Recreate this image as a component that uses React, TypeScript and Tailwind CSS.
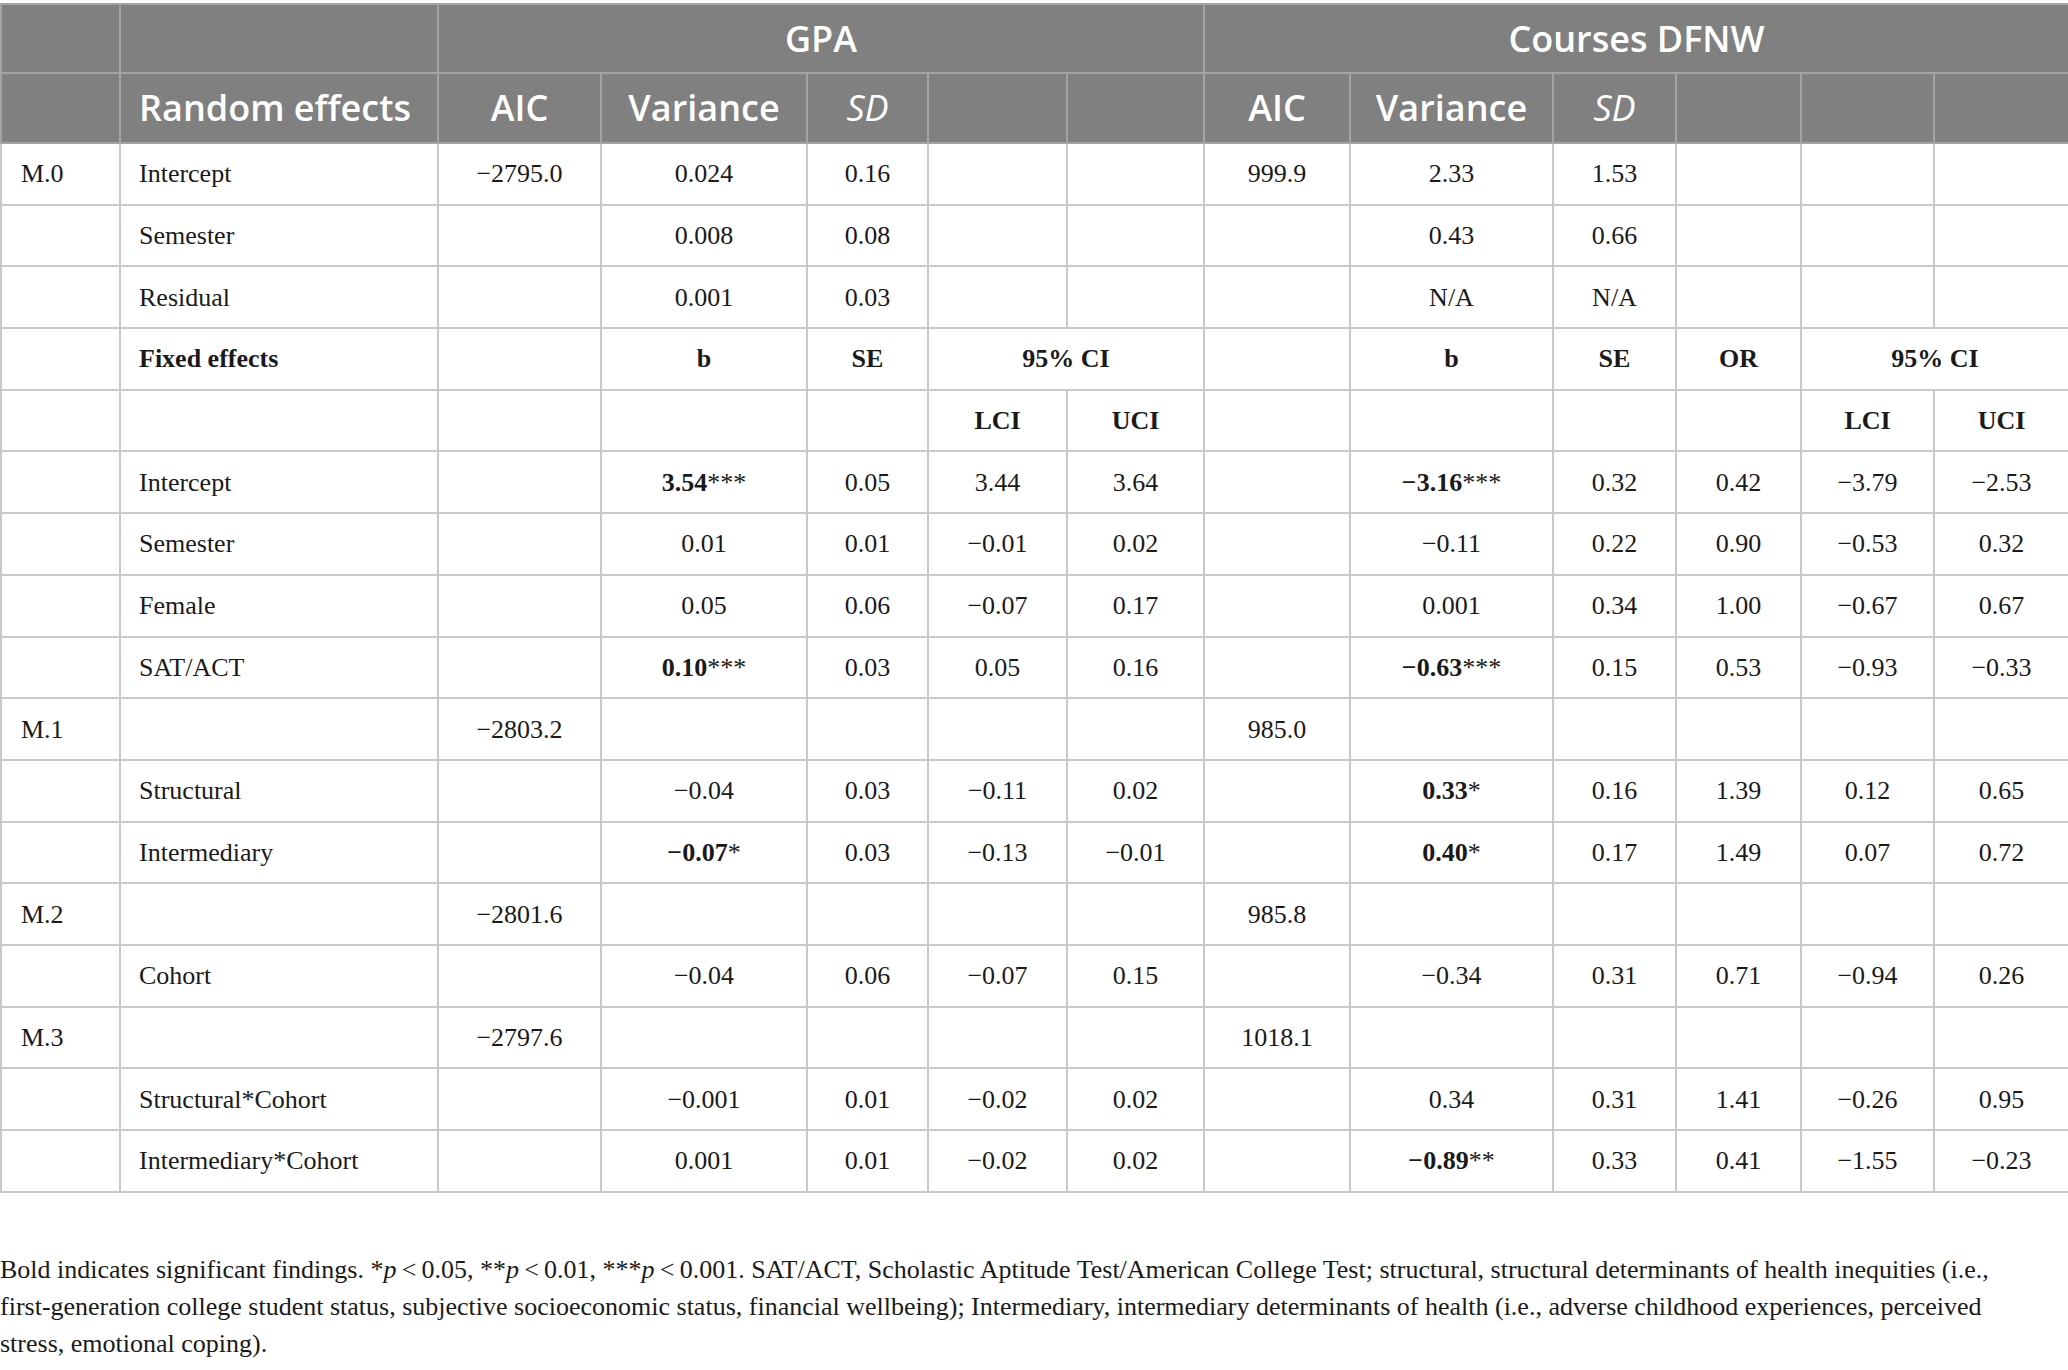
import React from "react";

type Cell =
  | null
  | string
  | { t: string; bold?: boolean; star?: string; span?: number; left?: boolean };

const M = "\u2212";

const rows: Cell[][] = [
  ["M.0", "Intercept", `${M}2795.0`, "0.024", "0.16", null, null, "999.9", "2.33", "1.53", null, null, null],
  [null, "Semester", null, "0.008", "0.08", null, null, null, "0.43", "0.66", null, null, null],
  [null, "Residual", null, "0.001", "0.03", null, null, null, "N/A", "N/A", null, null, null],
  [
    null,
    { t: "Fixed effects", bold: true },
    null,
    { t: "b", bold: true },
    { t: "SE", bold: true },
    { t: "95% CI", bold: true, span: 2 },
    null,
    { t: "b", bold: true },
    { t: "SE", bold: true },
    { t: "OR", bold: true },
    { t: "95% CI", bold: true, span: 2 },
  ],
  [null, null, null, null, null, { t: "LCI", bold: true }, { t: "UCI", bold: true }, null, null, null, null, { t: "LCI", bold: true }, { t: "UCI", bold: true }],
  [null, "Intercept", null, { t: "3.54", bold: true, star: "***" }, "0.05", "3.44", "3.64", null, { t: `${M}3.16`, bold: true, star: "***" }, "0.32", "0.42", `${M}3.79`, `${M}2.53`],
  [null, "Semester", null, "0.01", "0.01", `${M}0.01`, "0.02", null, `${M}0.11`, "0.22", "0.90", `${M}0.53`, "0.32"],
  [null, "Female", null, "0.05", "0.06", `${M}0.07`, "0.17", null, "0.001", "0.34", "1.00", `${M}0.67`, "0.67"],
  [null, "SAT/ACT", null, { t: "0.10", bold: true, star: "***" }, "0.03", "0.05", "0.16", null, { t: `${M}0.63`, bold: true, star: "***" }, "0.15", "0.53", `${M}0.93`, `${M}0.33`],
  ["M.1", null, `${M}2803.2`, null, null, null, null, "985.0", null, null, null, null, null],
  [null, "Structural", null, `${M}0.04`, "0.03", `${M}0.11`, "0.02", null, { t: "0.33", bold: true, star: "*" }, "0.16", "1.39", "0.12", "0.65"],
  [null, "Intermediary", null, { t: `${M}0.07`, bold: true, star: "*" }, "0.03", `${M}0.13`, `${M}0.01`, null, { t: "0.40", bold: true, star: "*" }, "0.17", "1.49", "0.07", "0.72"],
  ["M.2", null, `${M}2801.6`, null, null, null, null, "985.8", null, null, null, null, null],
  [null, "Cohort", null, `${M}0.04`, "0.06", `${M}0.07`, "0.15", null, `${M}0.34`, "0.31", "0.71", `${M}0.94`, "0.26"],
  ["M.3", null, `${M}2797.6`, null, null, null, null, "1018.1", null, null, null, null, null],
  [null, "Structural*Cohort", null, `${M}0.001`, "0.01", `${M}0.02`, "0.02", null, "0.34", "0.31", "1.41", `${M}0.26`, "0.95"],
  [null, "Intermediary*Cohort", null, "0.001", "0.01", `${M}0.02`, "0.02", null, { t: `${M}0.89`, bold: true, star: "**" }, "0.33", "0.41", `${M}1.55`, `${M}0.23`],
];

const widths = [119, 318, 163, 206, 121, 139, 137, 146, 203, 123, 125, 133, 135];

function BodyCell({ c, idx }: { c: Cell; idx: number }) {
  const left = idx < 2;
  const pad = idx === 0 ? "pl-[19px]" : idx === 1 ? "pl-[18px]" : "";
  const base = `border-2 border-[#c9c9c9] p-0 ${left ? "text-left" : "text-center"} ${pad}`;
  if (c === null) return <td className={base}></td>;
  if (typeof c === "string") return <td className={base}>{c}</td>;
  return (
    <td className={base} colSpan={c.span}>
      <span className={c.bold ? "font-bold" : ""}>{c.t}</span>
      {c.star ? <span className="font-normal">{c.star}</span> : null}
    </td>
  );
}

export default function App() {
  const hb = "border-2 border-[#a3a3a3] p-0";
  return (
    <div className="w-[2068px] bg-white pt-[3px]">
      <table
        className="w-[2068px] table-fixed border-collapse text-[#1a1a1a]"
        style={{ fontFamily: '"Liberation Serif", "Times New Roman", serif' }}
      >
        <colgroup>
          {widths.map((w, i) => (
            <col key={i} style={{ width: w }} />
          ))}
        </colgroup>
        <thead
          className="bg-[#808080] text-white text-[36px]"
          style={{ fontFamily: '"Open Sans", "Liberation Sans", sans-serif' }}
        >
          <tr className="h-[69px]">
            <th className={hb}></th>
            <th className={hb}></th>
            <th className={`${hb} font-semibold text-center`} colSpan={5}>
              GPA
            </th>
            <th className={`${hb} font-semibold text-center`} colSpan={6}>
              Courses DFNW
            </th>
          </tr>
          <tr className="h-[70px]">
            <th className={hb}></th>
            <th className={`${hb} font-semibold text-left pl-[18px]`}>Random effects</th>
            <th className={`${hb} font-semibold text-center`}>AIC</th>
            <th className={`${hb} font-semibold text-center`}>Variance</th>
            <th className={`${hb} font-normal text-center italic`}>SD</th>
            <th className={hb}></th>
            <th className={hb}></th>
            <th className={`${hb} font-semibold text-center`}>AIC</th>
            <th className={`${hb} font-semibold text-center`}>Variance</th>
            <th className={`${hb} font-normal text-center italic`}>SD</th>
            <th className={hb}></th>
            <th className={hb}></th>
            <th className={hb}></th>
          </tr>
        </thead>
        <tbody className="text-[26px]">
          {rows.map((r, ri) => {
            let col = 0;
            return (
              <tr key={ri} className="h-[61.7px]">
                {r.map((c, ci) => {
                  const idx = col;
                  const span = c && typeof c === "object" && c.span ? c.span : 1;
                  col += span;
                  if (idx >= 13) return null;
                  return <BodyCell key={ci} c={c} idx={idx} />;
                })}
              </tr>
            );
          })}
        </tbody>
      </table>
      <p
        className="mt-[58px] w-[2060px] text-[26px] leading-[37px] text-[#1a1a1a]"
        style={{ fontFamily: '"Liberation Serif", "Times New Roman", serif' }}
      >
        Bold indicates significant findings. *<i>p</i>{"\u2009<\u2009"}0.05, **<i>p</i>{"\u2009<\u2009"}0.01, ***<i>p</i>
        {"\u2009<\u2009"}0.001. SAT/ACT, Scholastic Aptitude Test/American College Test; structural, structural
        determinants of health inequities (i.e.,
        <br />
        first-generation college student status, subjective socioeconomic status, financial wellbeing); Intermediary,
        intermediary determinants of health (i.e., adverse childhood experiences, perceived
        <br />
        stress, emotional coping).
      </p>
    </div>
  );
}
